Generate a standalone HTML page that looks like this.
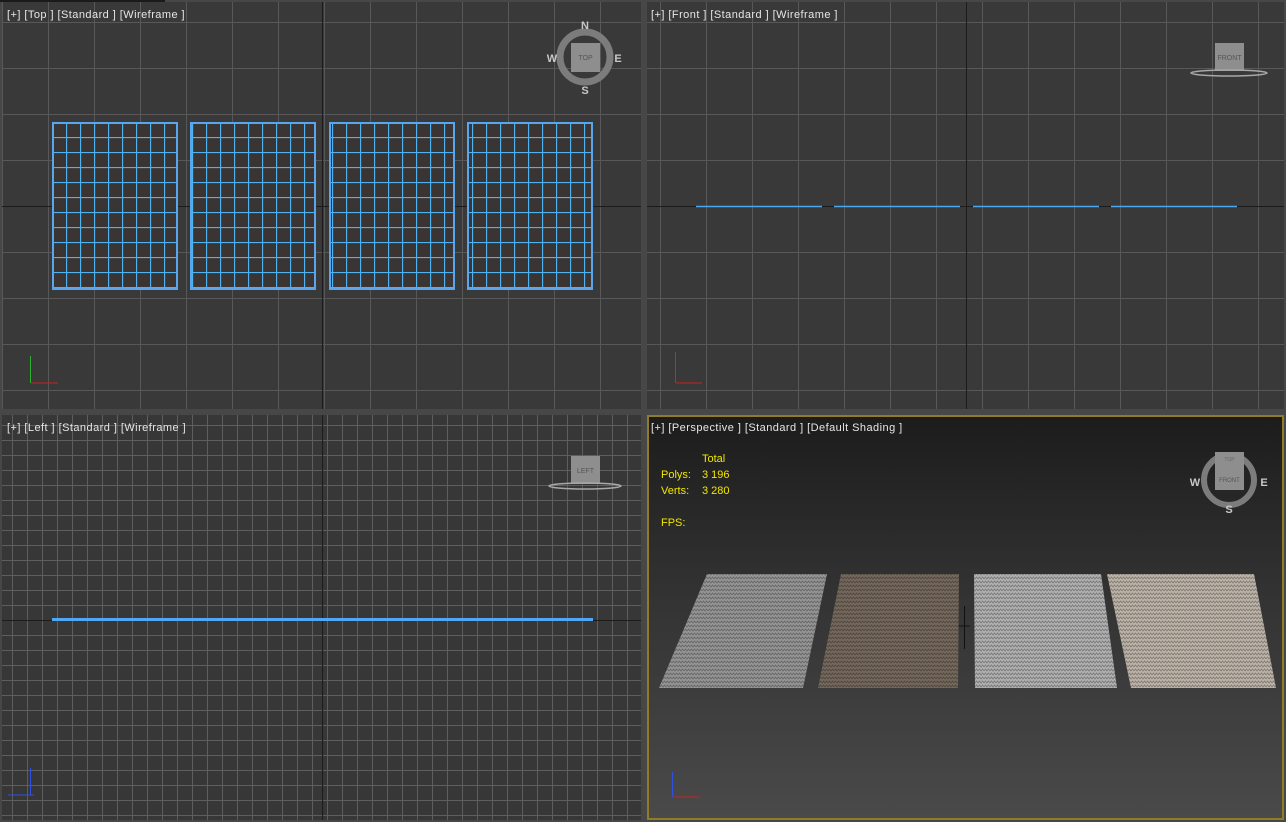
<!DOCTYPE html>
<html><head><meta charset="utf-8"><style>
html,body{margin:0;padding:0;background:#474747;width:1286px;height:822px;overflow:hidden;font-family:"Liberation Sans",sans-serif}
svg{position:absolute;left:0;top:0}
.lbl{position:absolute;color:#e6e6e6;font-size:11px;letter-spacing:0.45px;white-space:nowrap}
.y{position:absolute;color:#f2e600;font-size:11px}
</style></head><body>
<svg width="1286" height="822" xmlns="http://www.w3.org/2000/svg">
<defs>
<pattern id="g46a" x="0" y="0" width="46" height="46" patternUnits="userSpaceOnUse" patternTransform="translate(2 22)">
<path d="M0 0.5H46M0.5 0V46" stroke="#585858" stroke-width="1"/></pattern>
<pattern id="g46b" x="0" y="0" width="46" height="46" patternUnits="userSpaceOnUse" patternTransform="translate(16 22)">
<path d="M0 0.5H46M0.5 0V46" stroke="#585858" stroke-width="1"/></pattern>
<pattern id="g15" x="0" y="0" width="15" height="15" patternUnits="userSpaceOnUse" patternTransform="translate(12 440)">
<path d="M0 0.5H15M0.5 0V15" stroke="#5e5e5e" stroke-width="1"/></pattern>
<pattern id="cell" width="14" height="15" patternUnits="userSpaceOnUse" patternTransform="translate(52 122)">
<path d="M0 0.5H14M0.5 0V15" stroke="#4fb2f0" stroke-width="1.3"/></pattern>
<linearGradient id="pg" x1="0" y1="0" x2="0" y2="1">
<stop offset="0" stop-color="#1c1c1c"/><stop offset="0.45" stop-color="#333"/><stop offset="1" stop-color="#4a4a4a"/></linearGradient>
<pattern id="zz" width="6" height="4" patternUnits="userSpaceOnUse">
<path d="M0 3L1.5 1L3 3L4.5 1L6 3" fill="none" stroke="#000" stroke-opacity="0.3" stroke-width="0.9"/></pattern>
</defs>

<rect x="2" y="2" width="639" height="407" fill="#393939"/>
<rect x="2" y="2" width="639" height="407" fill="url(#g46a)"/>
<path d="M322.5 2V409M2 206.5H641" stroke="#1c1c1c"/>
<rect x="0" y="0" width="165" height="2" fill="#1a1a1a"/>
<g>
<rect x="52" y="122" width="126" height="168" fill="#3a3532"/>
<rect x="52" y="122" width="126" height="168" fill="url(#cell)"/>
<rect x="53" y="123" width="124" height="166" fill="none" stroke="#5aa6ee" stroke-width="2"/>
<rect x="190" y="122" width="126" height="168" fill="#3a3532"/>
<rect x="190" y="122" width="126" height="168" fill="url(#cell)"/>
<rect x="191" y="123" width="124" height="166" fill="none" stroke="#5aa6ee" stroke-width="2"/>
<rect x="329" y="122" width="126" height="168" fill="#3a3532"/>
<rect x="329" y="122" width="126" height="168" fill="url(#cell)"/>
<rect x="330" y="123" width="124" height="166" fill="none" stroke="#5aa6ee" stroke-width="2"/>
<rect x="467" y="122" width="126" height="168" fill="#3a3532"/>
<rect x="467" y="122" width="126" height="168" fill="url(#cell)"/>
<rect x="468" y="123" width="124" height="166" fill="none" stroke="#5aa6ee" stroke-width="2"/>
</g>
<circle cx="585" cy="57" r="25" fill="none" stroke="#7c7c7c" stroke-width="7"/>
<rect x="571" y="43" width="29" height="29" fill="#8e8e8e"/>
<text x="585.5" y="60" font-size="7" fill="#555" text-anchor="middle" font-family="Liberation Sans">TOP</text>
<g font-family="Liberation Sans" font-weight="bold" font-size="11" fill="#c8c8c8" text-anchor="middle">
<text x="585" y="29">N</text><text x="585" y="94">S</text><text x="618" y="62">E</text><text x="552" y="62">W</text></g>
<path d="M31 383H58" stroke="#d02020"/><path d="M30.5 356V383" stroke="#30b030"/>

<rect x="647" y="2" width="637" height="407" fill="#393939"/>
<rect x="647" y="2" width="637" height="407" fill="url(#g46b)"/>
<path d="M966.5 2V409M647 206.5H1284" stroke="#1c1c1c"/>
<path d="M696 206.5H822M834 206.5H960M973 206.5H1099M1111 206.5H1237" stroke="#4aa8f0" stroke-width="1.5"/>
<rect x="1215" y="43" width="29" height="28" fill="#8e8e8e"/>
<text x="1229.5" y="60" font-size="7" fill="#555" text-anchor="middle" font-family="Liberation Sans">FRONT</text>
<ellipse cx="1229" cy="73" rx="38" ry="3" fill="none" stroke="#a8a8a8" stroke-width="1.5"/>
<path d="M675.5 352V383" stroke="#3050e0"/><path d="M676 383H702" stroke="#d02020"/>

<rect x="2" y="415" width="639" height="405" fill="#373737"/>
<rect x="2" y="415" width="639" height="405" fill="url(#g15)"/>
<path d="M322.5 415V820M2 620.5H641" stroke="#1c1c1c"/>
<path d="M52 619.5H593" stroke="#50a8f4" stroke-width="3"/>
<rect x="571" y="456" width="29" height="28" fill="#8e8e8e"/>
<text x="585.5" y="473" font-size="7" fill="#555" text-anchor="middle" font-family="Liberation Sans">LEFT</text>
<ellipse cx="585" cy="486" rx="36" ry="3" fill="none" stroke="#a8a8a8" stroke-width="1.5"/>
<path d="M30.5 768V795" stroke="#3050e0"/><path d="M8 795H34" stroke="#3050e0"/>

<rect x="647" y="415" width="637" height="405" fill="url(#pg)"/>
<rect x="648" y="416" width="635" height="403" fill="none" stroke="#8f7c28" stroke-width="2"/>
<g>
<polygon points="707,574 827,574 803,688 659,688" fill="#959595"/>
<polygon points="707,574 827,574 803,688 659,688" fill="url(#zz)"/>
<polygon points="841,574 959,574 958,688 818,688" fill="#75685c"/>
<polygon points="841,574 959,574 958,688 818,688" fill="url(#zz)"/>
<polygon points="974,574 1101,574 1117,688 975,688" fill="#b0b0b0"/>
<polygon points="974,574 1101,574 1117,688 975,688" fill="url(#zz)"/>
<polygon points="1107,574 1254,574 1276,688 1131,688" fill="#bcb3a8"/>
<polygon points="1107,574 1254,574 1276,688 1131,688" fill="url(#zz)"/>
</g>
<path d="M964.5 606V649M959 626H970" stroke="#111"/>
<circle cx="1229" cy="480" r="25" fill="none" stroke="#7c7c7c" stroke-width="6"/>
<rect x="1215" y="452" width="29" height="38" fill="#8e8e8e"/>
<text x="1229.5" y="461" font-size="5" fill="#666" text-anchor="middle" font-family="Liberation Sans">TOP</text>
<text x="1229.5" y="482" font-size="6" fill="#555" text-anchor="middle" font-family="Liberation Sans">FRONT</text>
<g font-family="Liberation Sans" font-weight="bold" font-size="11" fill="#c8c8c8" text-anchor="middle">
<text x="1229" y="513">S</text><text x="1264" y="486">E</text><text x="1195" y="486">W</text></g>
<path d="M672.5 772V797" stroke="#3050e0"/><path d="M673 797H700" stroke="#d02020"/>
</svg>
<div class="lbl" style="left:7px;top:9px">[+] [Top ] [Standard ] [Wireframe ]</div>
<div class="lbl" style="left:651px;top:9px">[+] [Front ] [Standard ] [Wireframe ]</div>
<div class="lbl" style="left:7px;top:422px">[+] [Left ] [Standard ] [Wireframe ]</div>
<div class="lbl" style="left:651px;top:422px">[+] [Perspective ] [Standard ] [Default Shading ]</div>
<div class="y" style="left:702px;top:453px">Total</div>
<div class="y" style="left:661px;top:469px">Polys:</div><div class="y" style="left:702px;top:469px">3 196</div>
<div class="y" style="left:661px;top:485px">Verts:</div><div class="y" style="left:702px;top:485px">3 280</div>
<div class="y" style="left:661px;top:517px">FPS:</div>
</body></html>
